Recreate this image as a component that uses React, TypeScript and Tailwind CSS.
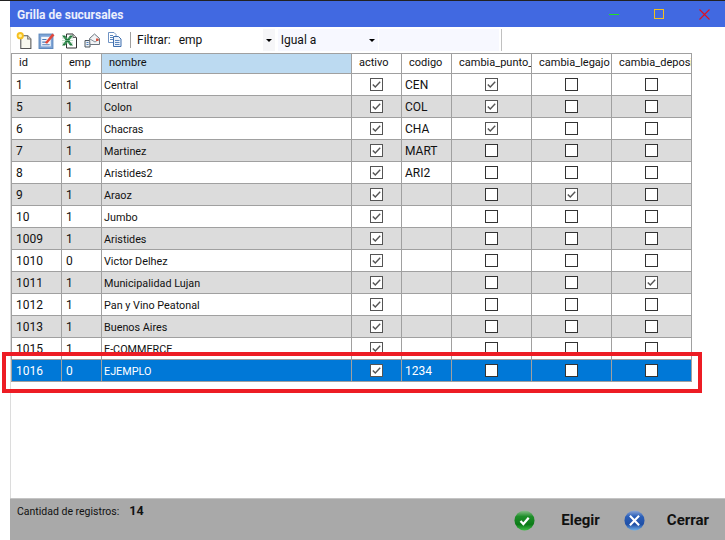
import { Fragment } from "react";

// ---------------------------------------------------------------------------
// Data
// ---------------------------------------------------------------------------

interface Sucursal {
  id: number;
  emp: number;
  nombre: string;
  activo: boolean;
  codigo: string;
  punto: boolean;
  legajo: boolean;
  deposito: boolean;
}

const rows: Sucursal[] = [
  { id: 1, emp: 1, nombre: "Central", activo: true, codigo: "CEN", punto: true, legajo: false, deposito: false },
  { id: 5, emp: 1, nombre: "Colon", activo: true, codigo: "COL", punto: true, legajo: false, deposito: false },
  { id: 6, emp: 1, nombre: "Chacras", activo: true, codigo: "CHA", punto: true, legajo: false, deposito: false },
  { id: 7, emp: 1, nombre: "Martinez", activo: true, codigo: "MART", punto: false, legajo: false, deposito: false },
  { id: 8, emp: 1, nombre: "Aristides2", activo: true, codigo: "ARI2", punto: false, legajo: false, deposito: false },
  { id: 9, emp: 1, nombre: "Araoz", activo: true, codigo: "", punto: false, legajo: true, deposito: false },
  { id: 10, emp: 1, nombre: "Jumbo", activo: true, codigo: "", punto: false, legajo: false, deposito: false },
  { id: 1009, emp: 1, nombre: "Aristides", activo: true, codigo: "", punto: false, legajo: false, deposito: false },
  { id: 1010, emp: 0, nombre: "Victor Delhez", activo: true, codigo: "", punto: false, legajo: false, deposito: false },
  { id: 1011, emp: 1, nombre: "Municipalidad Lujan", activo: true, codigo: "", punto: false, legajo: false, deposito: true },
  { id: 1012, emp: 1, nombre: "Pan y Vino Peatonal", activo: true, codigo: "", punto: false, legajo: false, deposito: false },
  { id: 1013, emp: 1, nombre: "Buenos Aires", activo: true, codigo: "", punto: false, legajo: false, deposito: false },
  { id: 1015, emp: 1, nombre: "E-COMMERCE", activo: true, codigo: "", punto: false, legajo: false, deposito: false },
  { id: 1016, emp: 0, nombre: "EJEMPLO", activo: true, codigo: "1234", punto: false, legajo: false, deposito: false },
];

const gridCols = "grid grid-cols-[50px_40px_250px_50px_50px_80px_80px_80px]";

// ---------------------------------------------------------------------------
// Sub-components
// ---------------------------------------------------------------------------

function Check({ checked, soft }: { checked: boolean; soft?: boolean }) {
  return (
    <svg width="13" height="13" viewBox="0 0 13 13" className="block">
      <rect x="0.5" y="0.5" width="12" height="12" fill="#fff" stroke={soft ? "#555" : "#333"} />
      {checked && <path d="M2.8 6.4 L5.3 9 L10.2 3.8" fill="none" stroke="#555" strokeWidth="1.4" />}
    </svg>
  );
}

function HeaderCell({ label, active }: { label: string; active?: boolean }) {
  return (
    <div
      className={`h-[19px] pl-[7px] overflow-hidden whitespace-nowrap leading-[18px] text-[11px] border-r border-[#a0a0a0] ${
        active ? "bg-[#bcdaf1]" : "bg-white"
      }`}
    >
      {label}
    </div>
  );
}

function TextCell({ children, className }: { children: React.ReactNode; className: string }) {
  return (
    <div className={`h-full overflow-hidden whitespace-nowrap border-r border-[#a0a0a0] ${className}`}>
      {children}
    </div>
  );
}

function CheckCell({ checked, soft }: { checked: boolean; soft?: boolean }) {
  return (
    <div className="h-full flex items-center justify-center border-r border-[#a0a0a0]">
      <Check checked={checked} soft={soft} />
    </div>
  );
}

function ToolbarIcons() {
  return (
    <Fragment>
      {/* nuevo */}
      <svg width="17" height="17" viewBox="0 0 16 16" className="ml-[6px]">
        <path d="M4.5 3.5 H11 L14 6.5 V15.5 H4.5 Z" fill="#f8f8ef" stroke="#555" />
        <path d="M11 3.5 V6.5 H14" fill="#ddd" stroke="#777" />
        <circle cx="4" cy="3.5" r="3.4" fill="#f7c020" />
        <circle cx="4" cy="3.5" r="1.6" fill="#fff3a0" />
      </svg>
      {/* editar */}
      <svg width="17" height="17" viewBox="0 0 16 16" className="ml-[5px]">
        <rect x="1" y="2" width="13" height="13.5" fill="#7ea4d6" stroke="#5d88bd" />
        <rect x="3" y="4.5" width="9" height="9" fill="#f4f7fc" />
        <path d="M4 7 H8 M4 9.5 H8 M4 12 H11" stroke="#4c7cb8" />
        <path d="M6.5 10 L13.5 1.5 L15.5 3 L8.5 11 Z" fill="#e2483a" />
      </svg>
      {/* excel */}
      <svg width="17" height="17" viewBox="0 0 17 16" className="ml-[6px]">
        <path d="M5.5 1.5 H12 L15.5 5 V15.5 H5.5 Z" fill="#fff" stroke="#333" />
        <path d="M12 1.5 V5 H15.5" fill="#ddd" stroke="#666" />
        <path d="M1 3 H4 L6.5 6.5 L9 3 H12 L8.2 8 L12 13 H9 L6.5 9.6 L4 13 H1 L4.8 8 Z" fill="#1f7a3c" />
        <path d="M1 5.5 H12 M1 8 H12 M1 10.5 H12" stroke="#8fc79f" strokeWidth="0.6" />
      </svg>
      {/* correo */}
      <svg width="17" height="16" viewBox="0 0 17 16" className="ml-[6px]">
        <path d="M1 8.5 H6 V15 H1 Z" fill="#eef2f6" stroke="#4d565f" />
        <path d="M5.5 6.5 L10.5 2 L15.5 6.5 V12.5 H6 Z" fill="#f2f4f6" stroke="#6c757e" />
        <path d="M6 7 L11 10 L15.5 7" fill="none" stroke="#8b949d" />
        <rect x="2.5" y="10" width="2" height="1" fill="#4c7cb8" />
        <rect x="2.5" y="12" width="2" height="1" fill="#4c7cb8" />
        <rect x="12" y="6.5" width="2.5" height="2.5" fill="#d8533f" />
      </svg>
      {/* copiar */}
      <svg width="15" height="15" viewBox="0 0 15 15" className="ml-[6px] -mt-[2px]">
        <path d="M1.5 0.5 H7 L9 2.5 V10.5 H1.5 Z" fill="#fff" stroke="#6f93c4" />
        <path d="M6.5 4.5 H11.5 L14 7 V14.5 H6.5 Z" fill="#eaf1fb" stroke="#3f6fae" />
        <path d="M3 3.5 H6 M3 5.5 H6 M3 7.5 H6 M8 8.5 H12.5 M8 10.5 H12.5 M8 12.5 H12.5" stroke="#5c86bd" />
      </svg>
    </Fragment>
  );
}

function Arrow() {
  return <span className="w-0 h-0 border-x-[3px] border-x-transparent border-t-[3px] border-t-black" />;
}

function Orb({ kind }: { kind: "ok" | "close" }) {
  const ok = kind === "ok";
  return (
    <svg width="21" height="21" viewBox="0 0 22 22">
      <defs>
        <linearGradient id={`orb-${kind}`} x1="0" y1="0" x2="0" y2="1">
          <stop offset="0%" stopColor={ok ? "#8fbf8f" : "#8fa8d6"} />
          <stop offset="30%" stopColor={ok ? "#1f8f2a" : "#2b5fb8"} />
          <stop offset="70%" stopColor={ok ? "#0c7a18" : "#1f4fa6"} />
          <stop offset="100%" stopColor={ok ? "#3fbf45" : "#6fb0ea"} />
        </linearGradient>
      </defs>
      <circle cx="11" cy="11" r="10.5" fill={`url(#orb-${kind})`} />
      {ok ? (
        <path d="M6.8 11.5 L9.8 14.6 L15.4 8.2" fill="none" stroke="#fff" strokeWidth="2.4" />
      ) : (
        <path d="M6.2 6 L15.8 16 M15.8 6 L6.2 16" fill="none" stroke="#fff" strokeWidth="2.2" />
      )}
    </svg>
  );
}

// ---------------------------------------------------------------------------
// Page
// ---------------------------------------------------------------------------

export default function App() {
  return (
    <div className="relative w-[725px] h-[540px] overflow-hidden bg-white flex flex-col text-[12px] text-[#111] font-['Roboto','Noto_Sans',sans-serif]">
      <div className="h-px bg-[#222]" />

      <div className="flex-1 min-h-0 ml-[10px] flex flex-col border-l border-[#dcdcdc]">
        {/* Title bar */}
        <div className="h-[26px] -ml-px bg-[#4169e1] flex items-center pl-[7px] pt-[2px] shrink-0">
          <span className="font-bold text-white/90 text-[12px] leading-none">Grilla de sucursales</span>
          <div className="ml-auto flex items-center -mt-[2px]">
            <span className="w-[10px] h-px bg-[#22e022]" />
            <span className="ml-[35px] w-[10px] h-[10px] border border-[#f0c020]" />
            <svg width="11" height="11" viewBox="0 0 11 11" className="ml-[35px] mr-[15px]">
              <path d="M0.5 0.5 L10.5 10.5 M10.5 0.5 L0.5 10.5" stroke="#e01020" strokeWidth="1.1" />
            </svg>
          </div>
        </div>

        {/* Toolbar */}
        <div className="h-[26px] shrink-0 flex items-center -ml-px">
          <ToolbarIcons />
          <span className="ml-[8px] w-px h-[16px] bg-[#a0a0a0]" />
          <span className="ml-[6px] text-[12px]">Filtrar:</span>
          <div className="ml-[4px] w-[100px] h-[22px] flex items-center justify-between pl-[4px] bg-white">
            <span>emp</span>
            <span className="w-[12px] h-full flex items-center justify-center bg-[#f6f6f8]">
              <Arrow />
            </span>
          </div>
          <div className="ml-[3px] w-[100px] h-[22px] flex items-center justify-between pl-[3px] bg-[#f7f8ff]">
            <span>Igual a</span>
            <span className="w-[12px] h-full flex items-center justify-center">
              <Arrow />
            </span>
          </div>
          <div className="ml-px w-[120px] h-[22px] bg-[#f7f8ff]" />
          <span className="ml-[2px] w-px h-[22px] bg-[#c0c0c0]" />
        </div>

        {/* Grid */}
        <div className="w-[681px] shrink-0 border-l border-t border-[#a0a0a0]">
          <div className={`${gridCols} border-b border-[#a0a0a0] h-[20px]`}>
            <HeaderCell label="id" />
            <HeaderCell label="emp" />
            <HeaderCell label="nombre" active />
            <HeaderCell label="activo" />
            <HeaderCell label="codigo" />
            <HeaderCell label="cambia_punto_" />
            <HeaderCell label="cambia_legajo" />
            <HeaderCell label="cambia_deposi" />
          </div>
          {rows.map((r, i) => {
            const selected = r.id === 1016;
            const bg = selected ? "bg-[#0078d7] text-white" : i % 2 === 1 ? "bg-[#dcdcdc]" : "bg-white";
            return (
              <div key={r.id} className={`${gridCols} h-[22px] border-b border-[#a0a0a0] ${bg}`}>
                <TextCell className="pl-[4px] text-[12px] leading-[22px]">{r.id}</TextCell>
                <TextCell className="pl-[4px] text-[12px] leading-[22px]">{r.emp}</TextCell>
                <TextCell className="pl-[2px] text-[10.8px] leading-[23px]">{r.nombre}</TextCell>
                <CheckCell checked={r.activo} soft />
                <TextCell className="pl-[3px] text-[12px] leading-[22px]">{r.codigo}</TextCell>
                <CheckCell checked={r.punto} soft={r.punto} />
                <CheckCell checked={r.legajo} soft={r.legajo} />
                <CheckCell checked={r.deposito} soft={r.deposito} />
              </div>
            );
          })}
        </div>

        {/* Footer */}
        <div className="mt-auto -ml-px h-[42px] shrink-0 bg-[#a9a9a9] border-t border-[#c4c4c4] flex">
          <div className="pl-[7px] pt-[3px] flex items-center self-start text-[10.5px]">
            <span>Cantidad de registros:</span>
            <span className="ml-[10px] font-bold text-[12.5px]">14</span>
          </div>
          <div className="ml-auto flex items-center h-full pt-[2px] font-bold text-[15px] text-[#111]">
            <Orb kind="ok" />
            <span className="ml-[26px]">Elegir</span>
            <span className="ml-[24px]"><Orb kind="close" /></span>
            <span className="ml-[22px] mr-[16px]">Cerrar</span>
          </div>
        </div>
      </div>

      {/* Red annotation over the selected row */}
      <div className="absolute left-[2px] top-[352px] w-[700px] h-[41px] border-[4px] border-[#ed1c24] pointer-events-none" />
    </div>
  );
}
